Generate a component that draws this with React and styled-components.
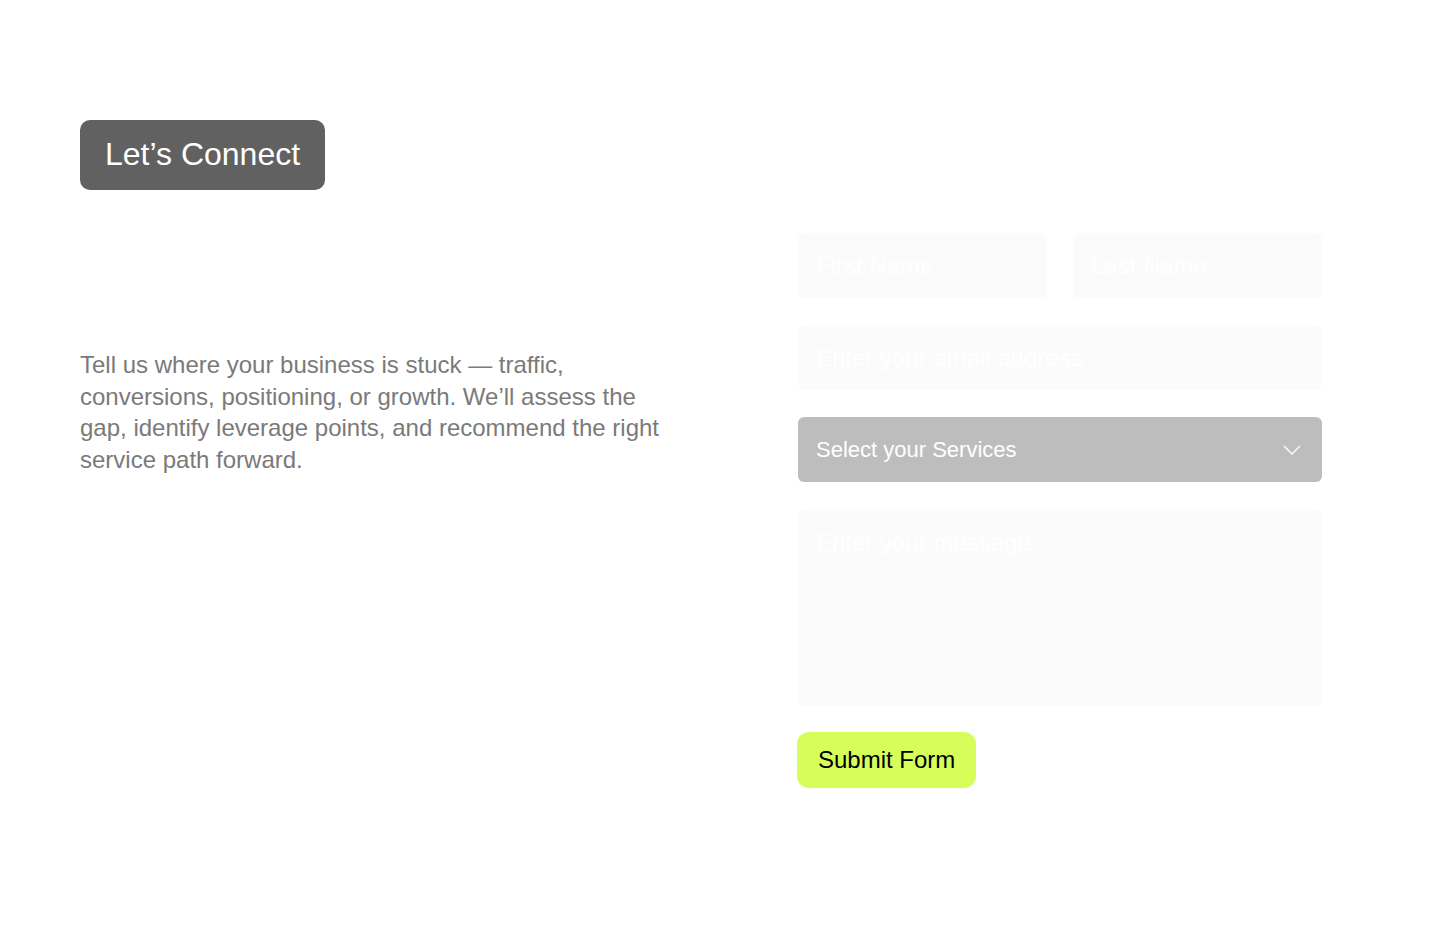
import React from 'react'
import styled, { createGlobalStyle } from 'styled-components'

const GlobalStyle = createGlobalStyle`
  * { box-sizing: border-box; }
  body {
    margin: 0;
    background: #fff;
    font-family: "Liberation Sans", Arial, sans-serif;
  }
`;

const Page = styled.div`
  padding: 120px 118px 120px 80px;
  min-height: 945px;
`;

const Badge = styled.h1`
  display: inline-block;
  margin: 0;
  padding: 15px 25px 16px;
  background-color: #616161;
  color: #fff;
  font-size: 32px;
  font-weight: 400;
  line-height: 39px;
  border-radius: 10px;
`;

const Columns = styled.div`
  display: grid;
  grid-template-columns: 1fr 524px;
  margin-top: 43px;
`;

const Intro = styled.p`
  margin: 0;
  padding-top: 116px;
  max-width: 595px;
  color: #7a7a7a;
  font-size: 24px;
  line-height: 31.5px;
`;

const Form = styled.form`
  display: flex;
  flex-direction: column;
  gap: 27px;
`;

const Row = styled.div`
  display: grid;
  grid-template-columns: 1fr 1fr;
  gap: 26px;
`;

const Input = styled.input`
  height: 65px;
  width: 100%;
  padding: 0 18px;
  border: none;
  border-radius: 6px;
  background-color: #fbfbfb;
  font-family: inherit;
  font-size: 24px;
  color: #333;
  outline: none;
  &::placeholder {
    color: #fff;
  }
`;

const Select = styled.div`
  display: flex;
  align-items: center;
  justify-content: space-between;
  height: 65px;
  padding: 0 21px 0 18px;
  border-radius: 6px;
  background-color: #bdbdbd;
  color: #fff;
  font-size: 22px;
`;

const TextArea = styled.textarea`
  height: 197px;
  width: 100%;
  padding: 20px 18px;
  border: none;
  border-radius: 6px;
  background-color: #fbfbfb;
  font-family: inherit;
  font-size: 24px;
  line-height: 28px;
  resize: none;
  outline: none;
  &::placeholder {
    color: #fff;
  }
`;

const Button = styled.button`
  align-self: flex-start;
  margin-left: -1px;
  margin-top: -1px;
  height: 56px;
  padding: 0 21px;
  border: none;
  border-radius: 12px;
  background-color: #d5fe5a;
  color: #000;
  font-family: inherit;
  font-size: 24px;
`;

const Chevron = () => (
  <svg width="18" height="10" viewBox="0 0 18 10" fill="none">
    <polyline points="1,1 9,9 17,1" stroke="#fff" strokeWidth="1.4" />
  </svg>
);

export default function App() {
  return (
    <Page>
      <GlobalStyle />
      <Badge>Let’s Connect</Badge>
      <Columns>
        <Intro>
          Tell us where your business is stuck — traffic, conversions, positioning, or growth.
          We’ll assess the gap, identify leverage points, and recommend the right service path forward.
        </Intro>
        <Form onSubmit={e => e.preventDefault()}>
          <Row>
            <Input placeholder="First Name" />
            <Input placeholder="Last Name" />
          </Row>
          <Input placeholder="Enter your email address" />
          <Select>
            <span>Select your Services</span>
            <Chevron />
          </Select>
          <TextArea placeholder="Enter your message" />
          <Button>Submit Form</Button>
        </Form>
      </Columns>
    </Page>
  )
}
